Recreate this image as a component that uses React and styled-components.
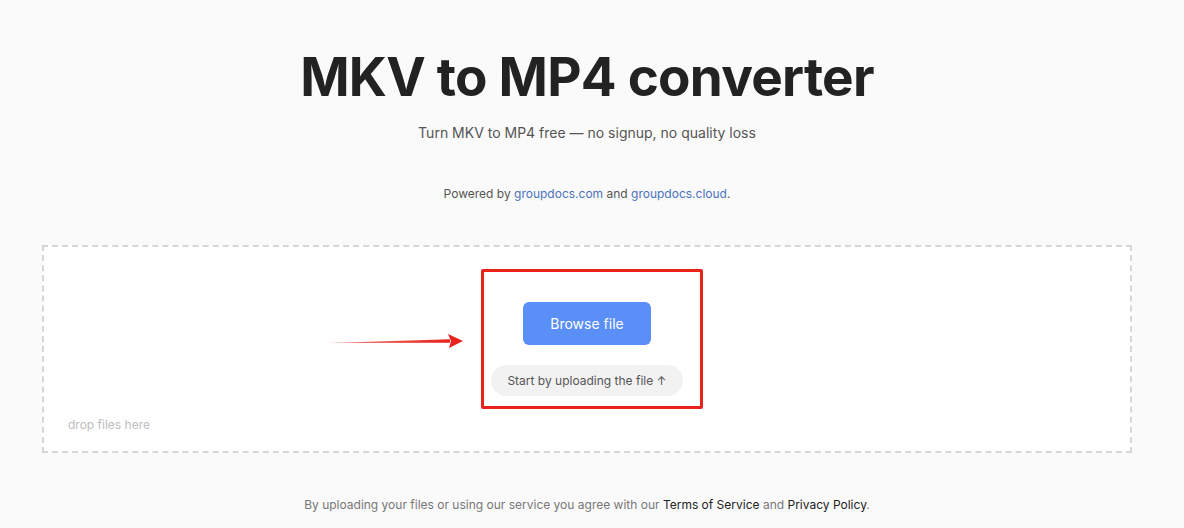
import React from 'react';
import styled, { createGlobalStyle } from 'styled-components';

const GlobalStyle = createGlobalStyle`
  body {
    margin: 0;
    background: #fafafa;
    font-family: Inter, "Noto Sans", sans-serif;
    color: #222;
  }
`;

const App = () => {
  return (
    <>
      <GlobalStyle />
      <Page>
        <Title>MKV to MP4 converter</Title>
        <Subtitle>Turn MKV to MP4 free — no signup, no quality loss</Subtitle>
        <Powered>
          Powered by <Link href='#'>groupdocs.com</Link> and{' '}
          <Link href='#'>groupdocs.cloud</Link>.
        </Powered>
        <DropZone>
          <Center>
            <BrowseButton>Browse file</BrowseButton>
            <HintPill>Start by uploading the file ↑</HintPill>
          </Center>
          <DropHint>drop files here</DropHint>
          <Highlight />
          <Arrow width='136' height='16' viewBox='0 0 136 16'>
            <defs>
              <linearGradient id='shaft' x1='0' x2='1' y1='0' y2='0'>
                <stop offset='0' stopColor='#e8231b' stopOpacity='0.6' />
                <stop offset='1' stopColor='#e8231b' />
              </linearGradient>
            </defs>
            <path d='M0 10 L122 6.2 L122 9.8 Z' fill='url(#shaft)' />
            <path d='M120 1 L135 8 L121 15 L123 8 Z' fill='#e8231b' />
          </Arrow>
        </DropZone>
        <Footer>
          By uploading your files or using our service you agree with our{' '}
          <DarkLink href='#'>Terms of Service</DarkLink> and{' '}
          <DarkLink href='#'>Privacy Policy</DarkLink>.
        </Footer>
      </Page>
    </>
  );
};

export default App;

const Page = styled.div`
  display: flex;
  flex-direction: column;
  align-items: center;
  padding: 44px 52px 0 42px;
`;

const Title = styled.h1`
  margin: 0;
  font-size: 53px;
  font-weight: 700;
  line-height: 66px;
  color: #222;
  letter-spacing: -0.75px;
`;

const Subtitle = styled.p`
  margin: 13px 0 0;
  font-size: 14px;
  line-height: 20px;
  color: #555;
`;

const Powered = styled.p`
  margin: 42px 0 0;
  font-size: 12px;
  line-height: 18px;
  color: #555;
`;

const Link = styled.a`
  color: #4a72bd;
  text-decoration: none;
`;

const DropZone = styled.div`
  position: relative;
  align-self: stretch;
  display: flex;
  flex-direction: column;
  margin-top: 42px;
  height: 208px;
  box-sizing: border-box;
  padding: 55px 24px 0;
  background: #fff;
  border: 2px dashed #d6d6d6;
`;

const Center = styled.div`
  display: flex;
  flex-direction: column;
  align-items: center;
  gap: 20px;
`;

const BrowseButton = styled.button`
  width: 128px;
  height: 43px;
  border: none;
  border-radius: 6px;
  background: #5a8ff8;
  color: #fff;
  font-family: Inter, "Noto Sans", sans-serif;
  font-size: 14px;
  cursor: pointer;
`;

const HintPill = styled.div`
  height: 31px;
  padding: 0 16px;
  display: flex;
  align-items: center;
  border-radius: 16px;
  background: #f2f2f2;
  font-size: 12px;
  color: #555;
`;

const DropHint = styled.div`
  margin-top: 21px;
  font-size: 12px;
  line-height: 16px;
  color: #bdbdbd;
`;

const Highlight = styled.div`
  position: absolute;
  left: 437px;
  top: 22px;
  width: 222px;
  height: 140px;
  box-sizing: border-box;
  border: 3px solid #e8231b;
  border-radius: 2px;
  pointer-events: none;
`;

const Arrow = styled.svg`
  position: absolute;
  left: 284px;
  top: 86px;
  pointer-events: none;
`;

const Footer = styled.p`
  margin: 43px 0 0;
  font-size: 12px;
  line-height: 18px;
  color: #777;
`;

const DarkLink = styled.a`
  color: #222;
  text-decoration: none;
`;
